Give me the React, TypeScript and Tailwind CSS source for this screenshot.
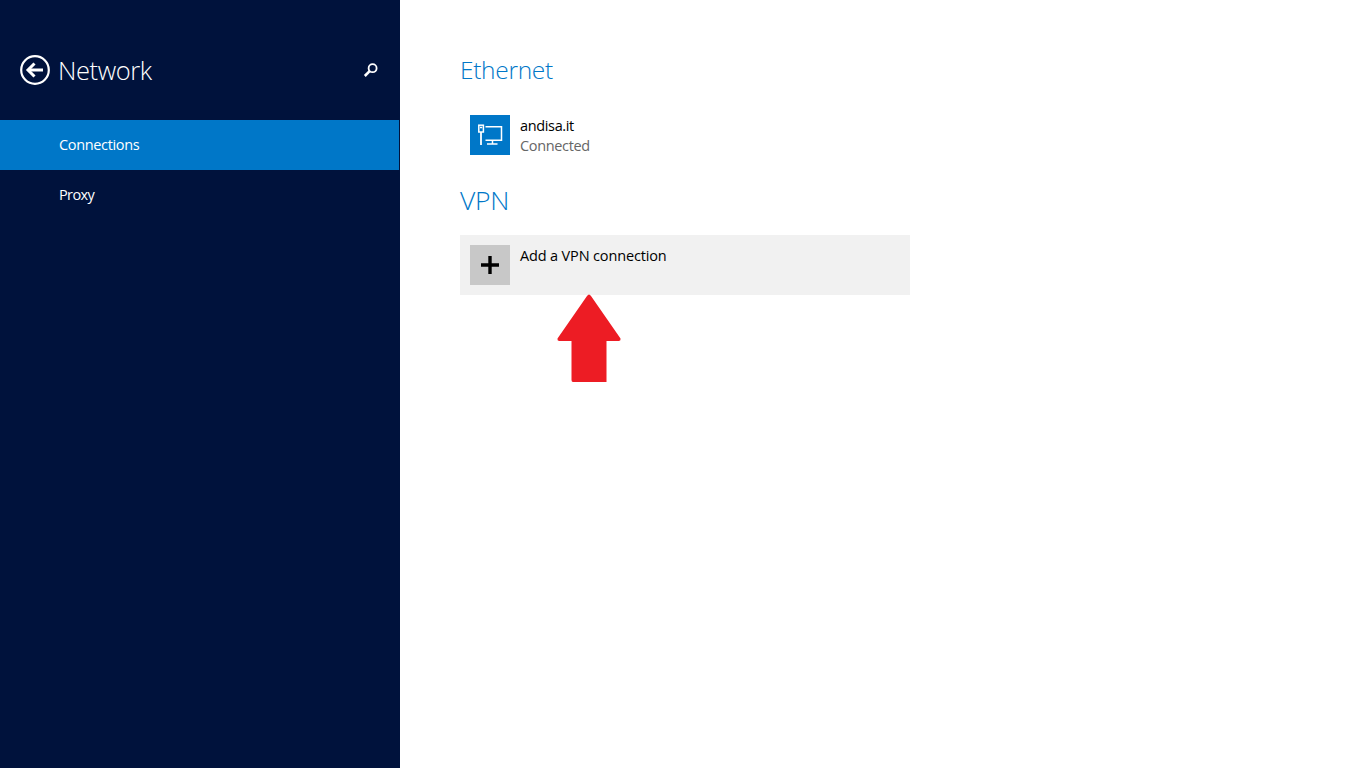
function BackIcon() {
  return (
    <svg width="32" height="32" viewBox="0 0 32 32" fill="none" stroke="white" className="shrink-0">
      <circle cx="16" cy="16" r="13.8" strokeWidth="2.2" />
      <path d="M24 16H9" strokeWidth="3" />
      <path d="M15.5 9.5L9 16l6.5 6.5" strokeWidth="3" />
    </svg>
  );
}

function SearchIcon() {
  return (
    <svg width="16" height="16" viewBox="0 0 16 16" fill="none" stroke="white">
      <circle cx="9.6" cy="6.2" r="4" strokeWidth="1.8" />
      <path d="M6.6 9.2L1.8 14" strokeWidth="2.6" />
    </svg>
  );
}

function EthernetIcon() {
  return (
    <svg width="40" height="40" viewBox="0 0 40 40" fill="none" stroke="white" strokeWidth="1.5">
      <rect x="8.8" y="10.2" width="4.6" height="6.8" />
      <path d="M10 12.5h2.2" />
      <path d="M11 17v13" strokeWidth="1.8" />
      <path d="M15.5 11.7h16v13.6h-16" />
      <path d="M22.5 25.5v3.2M17 29h10.5" />
    </svg>
  );
}

function RedArrow() {
  return (
    <svg width="64" height="88" viewBox="0 0 64 88" fill="#ed1c24">
      <path d="M32 0.5Q33 0.5 34 2L63.5 44.5Q64 46.5 62 47H49.5V88H16Q14.5 88 14.5 86V47H2Q0 46.5 0.5 44.5L30 2Q31 0.5 32 0.5Z" />
    </svg>
  );
}

export default function App() {
  return (
    <div className="flex h-screen w-screen overflow-hidden bg-white font-['Open_Sans','Noto_Sans',sans-serif]">
      <aside className="flex h-full w-[400px] shrink-0 flex-col bg-[#00123c] text-white">
        <div className="flex h-[120px] items-center pt-[20px] pl-[19px] pr-[21px]">
          <BackIcon />
          <h1 className="ml-[7px] flex-1 text-[25.5px] font-light tracking-[-0.4px]">Network</h1>
          <SearchIcon />
        </div>
        <div className="flex h-[50px] w-[399px] items-center bg-[#0077c8] pl-[59px] text-[14.5px] tracking-[-0.35px]">
          Connections
        </div>
        <div className="flex h-[50px] items-center pl-[59px] text-[14.5px] tracking-[-0.6px]">Proxy</div>
      </aside>

      <main className="flex-1 pl-[60px] pt-[50px]">
        <h2 className="h-[40px] text-[24.5px] leading-[40px] font-light tracking-[-0.3px] text-[#0077c8]">Ethernet</h2>

        <div className="mt-[15px] flex h-[60px] w-[450px] items-start p-[10px]">
          <div className="flex h-[40px] w-[40px] shrink-0 items-center justify-center bg-[#0077c8]">
            <EthernetIcon />
          </div>
          <div className="ml-[10px] mt-[1px] text-[14.5px] leading-[20px] tracking-[-0.35px]">
            <div className="text-black">andisa.it</div>
            <div className="text-[#666666]">Connected</div>
          </div>
        </div>

        <h2 className="mt-[15px] h-[40px] text-[26.5px] leading-[40px] font-light tracking-[-0.3px] text-[#0077c8]">VPN</h2>

        <div className="mt-[15px] flex h-[60px] w-[450px] items-start bg-[#f1f1f1] p-[10px]">
          <div className="flex h-[40px] w-[40px] shrink-0 items-center justify-center bg-[#c8c8c8]">
            <svg width="20" height="20" viewBox="0 0 20 20" fill="none" stroke="black" strokeWidth="3.4">
              <path d="M10 1v18M1 10h18" />
            </svg>
          </div>
          <div className="ml-[10px] mt-[1px] text-[14.5px] leading-[20px] tracking-[-0.15px] text-black">Add a VPN connection</div>
        </div>

        <div className="mt-[-1px] ml-[97px] w-[64px]">
          <RedArrow />
        </div>
      </main>
    </div>
  );
}
